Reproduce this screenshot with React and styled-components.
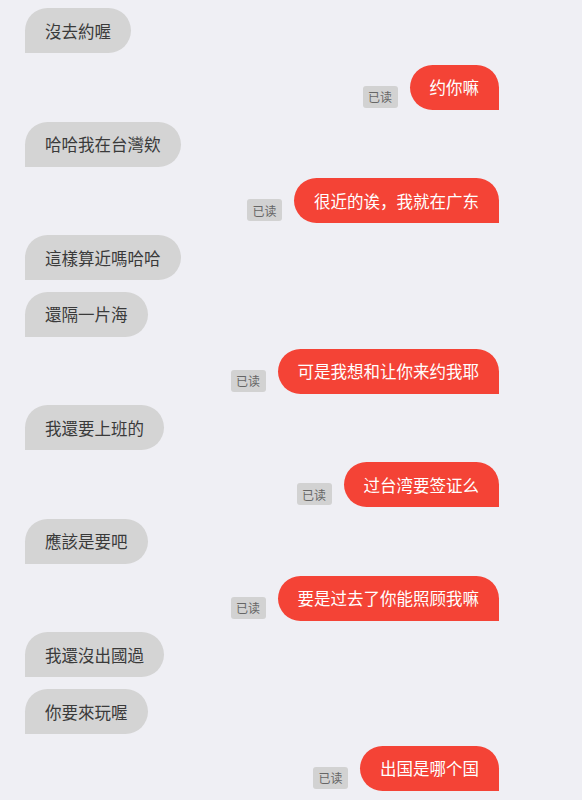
import React from "react";
import styled, { createGlobalStyle } from "styled-components";

const GlobalStyle = createGlobalStyle`
  html, body {
    margin: 0;
    padding: 0;
    background: #efeff4;
  }
  body {
    font-family: "Noto Sans CJK SC", "Noto Sans CJK TC", "Liberation Sans", sans-serif;
  }
`;

const ChatList = styled.div`
  display: flex;
  flex-direction: column;
  gap: 11.75px;
  padding: 8px 83px 20px 25px;
`;

const Row = styled.div`
  display: flex;
  align-items: flex-end;
  justify-content: ${(p) => (p.mine ? "flex-end" : "flex-start")};
  gap: 12px;
`;

const Bubble = styled.div`
  height: 45px;
  box-sizing: border-box;
  display: flex;
  align-items: center;
  padding: 0 20px;
  font-size: 16.5px;
  white-space: nowrap;
  background: ${(p) => (p.mine ? "#f44336" : "#d4d4d4")};
  color: ${(p) => (p.mine ? "#ffffff" : "#3a3a3a")};
  border-radius: ${(p) => (p.mine ? "23px 23px 0 23px" : "23px 23px 23px 0")};
`;

const ReadTag = styled.span`
  display: inline-flex;
  align-items: center;
  justify-content: center;
  width: 35px;
  height: 22px;
  margin-bottom: 2px;
  border-radius: 3px;
  background: #d2d2d2;
  color: #666;
  font-size: 12px;
`;

const messages = [
  { text: "沒去約喔" },
  { text: "约你嘛", mine: true },
  { text: "哈哈我在台灣欸" },
  { text: "很近的诶，我就在广东", mine: true },
  { text: "這樣算近嗎哈哈" },
  { text: "還隔一片海" },
  { text: "可是我想和让你来约我耶", mine: true },
  { text: "我還要上班的" },
  { text: "过台湾要签证么", mine: true },
  { text: "應該是要吧" },
  { text: "要是过去了你能照顾我嘛", mine: true },
  { text: "我還沒出國過" },
  { text: "你要來玩喔" },
  { text: "出国是哪个国", mine: true },
];

export default function App() {
  return (
    <>
      <GlobalStyle />
      <ChatList>
        {messages.map((m, i) => (
          <Row key={i} mine={m.mine}>
            {m.mine && <ReadTag>已读</ReadTag>}
            <Bubble mine={m.mine}>{m.text}</Bubble>
          </Row>
        ))}
      </ChatList>
    </>
  );
}
